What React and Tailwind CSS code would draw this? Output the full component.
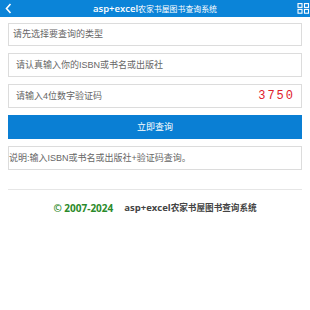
import { useState } from "react";

const CN = { fontFamily: '"Liberation Sans", "Noto Sans CJK SC", sans-serif' };
const LAT = { fontFamily: '"Open Sans", "Noto Sans CJK SC", sans-serif' };

function Header() {
  return (
    <div className="relative h-[17px] bg-[#0b84d8] flex items-center justify-center overflow-hidden">
      {/* back arrow */}
      <svg className="absolute left-[5px] top-[3px]" width="7" height="11" viewBox="0 0 7 11">
        <path d="M5.5 1 L1.5 5.5 L5.5 10" stroke="#fff" strokeWidth="1.6" fill="none" />
      </svg>
      <div className="text-white leading-none flex items-baseline" style={LAT}>
        <span className="text-[9.5px] font-semibold">asp+excel</span>
        <span className="text-[7.9px]" style={CN}>农家书屋图书查询系统</span>
      </div>
      {/* menu grid */}
      <svg className="absolute left-[297px] top-[3px]" width="14" height="11" viewBox="0 0 14 11">
        <rect x="1" y="0.6" width="4" height="3.8" stroke="#fff" strokeWidth="1.1" fill="none" />
        <rect x="7.5" y="0.6" width="4" height="3.8" stroke="#fff" strokeWidth="1.1" fill="none" />
        <rect x="1" y="6.4" width="4" height="3.8" stroke="#fff" strokeWidth="1.1" fill="none" />
        <rect x="7.5" y="6.4" width="4" height="3.8" stroke="#fff" strokeWidth="1.1" fill="none" />
      </svg>
    </div>
  );
}

function Field({ placeholder, h = "h-[24px]", pl = "pl-[7px]", children }) {
  return (
    <div className={`${h} border border-[#dcdcdc] bg-white flex items-center justify-between ${pl} pr-[6px]`}>
      <span className="text-[9px] text-[#666] leading-none" style={CN}>{placeholder}</span>
      {children}
    </div>
  );
}

export default function App() {
  const [code] = useState("3750");

  return (
    <div className="w-[310px] h-[310px] bg-white overflow-hidden">
      <Header />
      <div className="px-[8px] pt-[6px] flex flex-col gap-[7px]">
        <Field placeholder="请先选择要查询的类型" h="h-[23px]" pl="pl-[4px]" />
        <Field placeholder="请认真输入你的ISBN或书名或出版社" />
        <Field placeholder="请输入4位数字验证码">
          <span
            className="text-[12px] text-[#e0202a] leading-none tracking-[2px] mr-[0px]"
            style={{ fontFamily: '"Liberation Mono", monospace' }}
          >
            {code}
          </span>
        </Field>
        <div className="h-[24px] bg-[#0a7fd4] flex items-center justify-center">
          <span className="text-[9px] text-white leading-none" style={CN}>立即查询</span>
        </div>
        <Field placeholder="说明:输入ISBN或书名或出版社+验证码查询。" pl="pl-[0px]" />
      </div>
      <div className="mx-[8px] mt-[19px] border-t border-[#e6e6e6]" />
      <div className="mt-[13px] flex items-center justify-center gap-[11px] font-bold leading-none" style={LAT}>
        <span className="text-[10px] text-[#2a8a2a]">© 2007-2024</span>
        <span className="text-[#444] flex items-baseline">
          <span className="text-[9.5px]">asp+excel</span>
          <span className="text-[8.6px]" style={CN}>农家书屋图书查询系统</span>
        </span>
      </div>
    </div>
  );
}
